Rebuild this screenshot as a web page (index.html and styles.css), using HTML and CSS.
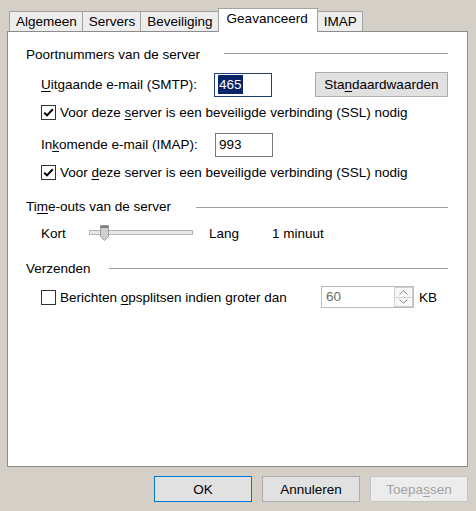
FILE: index.html
```html
<!DOCTYPE html>
<html>
<head>
<meta charset="utf-8">
<link rel="stylesheet" href="styles.css">
</head>
<body>
<div class="dialog">
  <div class="tabs">
    <div class="tab">Algemeen</div>
    <div class="tab">Servers</div>
    <div class="tab">Beveiliging</div>
    <div class="tab active">Geavanceerd</div>
    <div class="tab">IMAP</div>
  </div>
  <div class="panel">
    <div class="group-title"><span>Poortnummers van de server</span><span class="rule"></span></div>
    <div class="field-row first">
      <span class="field-label"><u>U</u>itgaande e-mail (SMTP):</span>
      <span class="textbox focused"><span class="sel">465</span></span>
      <span class="btn defaults">Sta<u>n</u>daardwaarden</span>
    </div>
    <div class="check-row">
      <svg class="checkbox" width="15" height="15" viewBox="0 0 15 15"><rect x="0.5" y="0.5" width="14" height="14" fill="#fff" stroke="#333"/><path d="M3.2 7.6 L6 10.4 L11.8 4.2" fill="none" stroke="#000" stroke-width="2"/></svg>
      <span>Voor deze <u>s</u>erver is een beveiligde verbinding (SSL) nodig</span>
    </div>
    <div class="field-row second">
      <span class="field-label">In<u>k</u>omende e-mail (IMAP):</span>
      <span class="textbox">993</span>
    </div>
    <div class="check-row">
      <svg class="checkbox" width="15" height="15" viewBox="0 0 15 15"><rect x="0.5" y="0.5" width="14" height="14" fill="#fff" stroke="#333"/><path d="M3.2 7.6 L6 10.4 L11.8 4.2" fill="none" stroke="#000" stroke-width="2"/></svg>
      <span>Voor <u>d</u>eze server is een beveiligde verbinding (SSL) nodig</span>
    </div>

    <div class="group-title g2"><span>Ti<u>m</u>e-outs van de server</span><span class="rule"></span></div>
    <div class="slider-row">
      <span class="slider-label">Kort</span>
      <svg class="slider" width="105" height="17" viewBox="0 0 105 17">
        <rect x="0.5" y="5.5" width="103" height="4" fill="#e7e7e7" stroke="#b4b4b4"/>
        <path d="M11.5 0.5 H19.5 V11.5 L15.5 15.5 L11.5 11.5 Z" fill="#cfcfcf" stroke="#9a9a9a"/>
        <rect x="12" y="1" width="7" height="2" fill="#7e7e7e"/>
      </svg>
      <span class="lang">Lang</span>
      <span class="minuut">1 minuut</span>
    </div>

    <div class="group-title g3"><span>Verzenden</span><span class="rule"></span></div>
    <div class="split-row">
      <div class="split-check">
        <svg class="checkbox" width="15" height="15" viewBox="0 0 15 15"><rect x="0.5" y="0.5" width="14" height="14" fill="#fff" stroke="#333"/></svg>
        <span>Berichten <u>o</u>psplitsen indien groter dan</span>
      </div>
      <div class="spinner">
        <span class="spin-value">60</span>
        <span class="spin-buttons">
          <span class="spin-btn"><svg width="9" height="5" viewBox="0 0 9 5"><path d="M0.5 4.5 L4.5 0.8 L8.5 4.5" fill="none" stroke="#8a8a8a"/></svg></span>
          <span class="spin-btn"><svg width="9" height="5" viewBox="0 0 9 5"><path d="M0.5 0.5 L4.5 4.2 L8.5 0.5" fill="none" stroke="#8a8a8a"/></svg></span>
        </span>
      </div>
      <span class="unit">KB</span>
    </div>
  </div>
  <div class="buttons">
    <span class="btn dlg primary">OK</span>
    <span class="btn dlg">Annuleren</span>
    <span class="btn dlg disabled">Toepa<u>s</u>sen</span>
  </div>
</div>
</body>
</html>
```
FILE: styles.css
```css
* { box-sizing: border-box; }
html, body { margin: 0; padding: 0; }
body {
  background: #d4d0c8;
  font-family: "Liberation Sans", Arial, sans-serif;
  font-size: 13.5px;
  color: #000;
}
u { text-decoration: underline; text-underline-offset: 2px; text-decoration-thickness: 1px; }
.dialog {
  width: 476px;
  height: 511px;
  display: flex;
  flex-direction: column;
  padding: 8px 8px 0 7px;
}
.tabs {
  display: flex;
  align-items: flex-end;
  height: 23px;
  margin-left: 2px;
}
.tab {
  height: 20px;
  line-height: 19px;
  padding: 0 5px 0 6px;
  background: #ededed;
  border: 1px solid #a3a3a3;
  border-bottom: none;
  margin-left: -1px;
  white-space: nowrap;
}
.tab:first-child { margin-left: 0; }
.tab.active {
  height: 24px;
  line-height: 20px;
  padding: 0 9px 0 8px;
  background: #fff;
  margin-bottom: -1px;
  position: relative;
  z-index: 1;
}
.panel {
  flex: 1;
  background: #fff;
  border: 1px solid #8c8c8c;
  padding: 15px 19px 0 18px;
  display: flex;
  flex-direction: column;
}
.group-title {
  display: flex;
  align-items: center;
  height: 16px;
  line-height: 16px;
  white-space: nowrap;
}
.group-title .rule {
  flex: 1;
  height: 1px;
  background: #a0a0a0;
  margin-left: 24px;
  margin-top: -3px;
}
.group-title.g2 { margin-top: 19px; }
.group-title.g2 .rule { margin-left: 25px; margin-top: 0; }
.group-title.g3 { margin-top: 20px; }
.group-title.g3 .rule { margin-left: 18px; margin-top: -2px; }
.field-row {
  display: flex;
  align-items: center;
  padding-left: 15px;
  height: 25px;
}
.field-row.first { margin-top: 9px; }
.field-row.second { margin-top: 12px; }
.field-label { width: 174px; white-space: nowrap; }
.textbox {
  width: 58px;
  height: 24px;
  border: 1px solid #7a7a7a;
  background: #fff;
  padding: 0 3px;
  line-height: 22px;
  display: flex;
  align-items: center;
}
.textbox.focused { border-color: #1f3f75; }
.sel {
  background: #0a246a;
  color: #fff;
  line-height: 19px;
  padding: 0 1px;
}
.btn {
  display: flex;
  align-items: center;
  justify-content: center;
  background: #e1e1e1;
  border: 1px solid #adadad;
  white-space: nowrap;
}
.btn.defaults {
  width: 134px;
  height: 25px;
  margin-left: 43px;
}
.check-row {
  display: flex;
  align-items: center;
  height: 15px;
  margin-top: 8px;
  padding-left: 15px;
  white-space: nowrap;
}
.checkbox { flex: none; margin-right: 4px; }
.slider-row {
  display: flex;
  align-items: center;
  height: 16px;
  margin-top: 10px;
  padding-left: 15px;
}
.slider-label { width: 48px; }
.slider { flex: none; margin-top: 1px; }
.lang { margin-left: 15px; }
.minuut { margin-left: 33px; }
.split-row {
  display: flex;
  align-items: center;
  height: 22px;
  margin-top: 9px;
  padding-left: 15px;
}
.split-check {
  width: 280px;
  display: flex;
  align-items: center;
  white-space: nowrap;
}
.spinner {
  width: 93px;
  height: 22px;
  border: 1px solid #bcbcbc;
  background: #fff;
  display: flex;
}
.spin-value {
  flex: 1;
  color: #6d6d6d;
  padding-left: 4px;
  line-height: 19px;
}
.spin-buttons {
  width: 19px;
  display: flex;
  flex-direction: column;
}
.spin-btn {
  flex: 1;
  border: 1px solid #d0d0d0;
  background: #f7f7f7;
  display: flex;
  align-items: center;
  justify-content: center;
}
.spin-btn + .spin-btn { border-top: none; }
.unit { margin-left: 5px; }
.buttons {
  display: flex;
  justify-content: flex-end;
  gap: 10px;
  margin: 9px 0 9px 0;
  height: 26px;
}
.btn.dlg { width: 98px; height: 26px; }
.btn.primary { border-color: #0078d7; }
.btn.disabled { background: #ececec; border-color: #c6c6c6; color: #a2a2a2; }
```
